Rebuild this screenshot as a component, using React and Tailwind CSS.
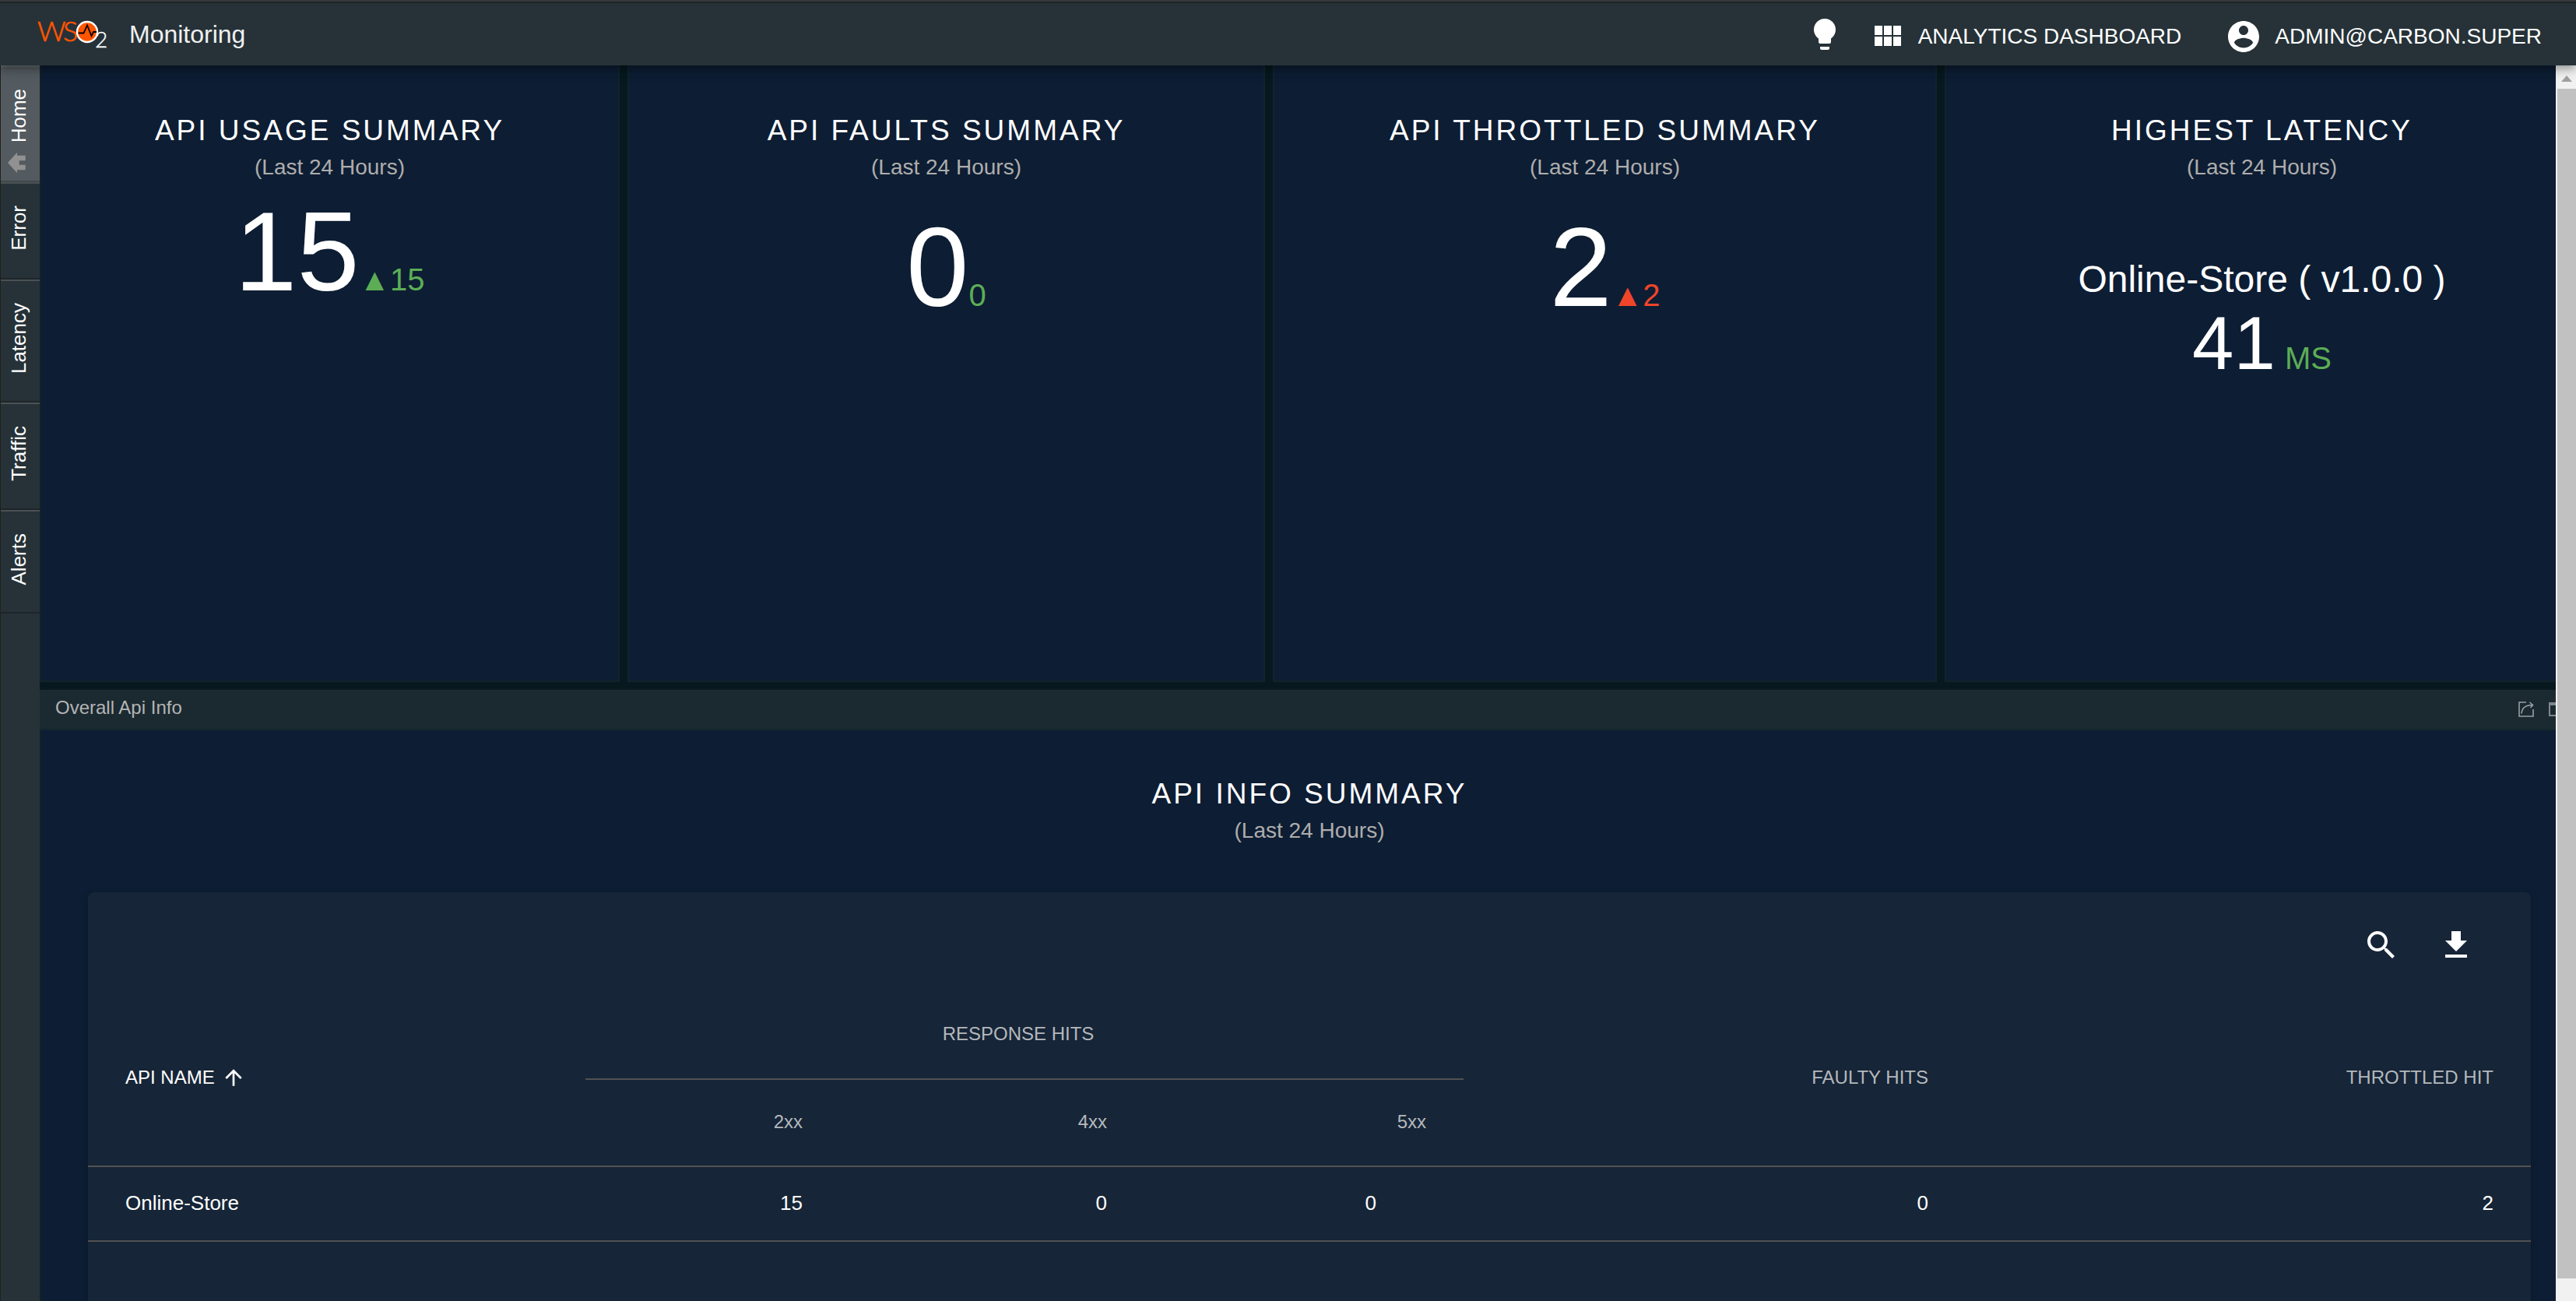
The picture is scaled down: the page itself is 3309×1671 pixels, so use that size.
import React from "react";

function Icon({ d, className, label }) {
  return (
    <svg viewBox="0 0 24 24" fill="currentColor" className={className} aria-hidden={label ? undefined : true} aria-label={label}>
      <path d={d} />
    </svg>
  );
}

const ICONS = {
  bulb: "M9 21c0 .55.45 1 1 1h4c.55 0 1-.45 1-1v-1H9v1zm3-19C8.14 2 5 5.14 5 9c0 2.38 1.19 4.47 3 5.74V17c0 .55.45 1 1 1h6c.55 0 1-.45 1-1v-2.26c1.81-1.27 3-3.36 3-5.74 0-3.86-3.14-7-7-7z",
  module: "M4 11h5V5H4v6zm0 7h5v-6H4v6zm6 0h5v-6h-5v6zm6 0h5v-6h-5v6zm-6-7h5V5h-5v6zm6-6v6h5V5h-5z",
  account:
    "M12 2C6.48 2 2 6.48 2 12s4.48 10 10 10 10-4.48 10-10S17.52 2 12 2zm0 3c1.66 0 3 1.34 3 3s-1.34 3-3 3-3-1.34-3-3 1.34-3 3-3zm0 14.2c-2.5 0-4.71-1.28-6-3.22.03-1.99 4-3.08 6-3.08 1.99 0 5.97 1.09 6 3.08-1.29 1.94-3.5 3.22-6 3.22z",
  home: "M10 20v-6h4v6h5v-8h3L12 3 2 12h3v8z",
  search:
    "M15.5 14h-.79l-.28-.27C15.41 12.59 16 11.11 16 9.5 16 5.91 13.09 3 9.5 3S3 5.91 3 9.5 5.91 16 9.5 16c1.61 0 3.09-.59 4.23-1.57l.27.28v.79l5 4.99L20.49 19l-4.99-5zm-6 0C7.01 14 5 11.99 5 9.5S7.01 5 9.5 5 14 7.01 14 9.5 11.99 14 9.5 14z",
  download: "M19 9h-4V3H9v6H5l7 7 7-7zM5 18v2h14v-2H5z",
  arrowUp: "M4 12l1.41 1.41L11 7.83V20h2V7.83l5.58 5.59L20 12l-8-8-8 8z",
};

function Logo() {
  return (
    <svg viewBox="-4 -12 104 60" className="h-15 w-26" role="img" aria-label="WSO2">
      <text x="0" y="27" fill="#ff5500" stroke="#ff5500" strokeWidth="0.7" className="font-['Lato'] text-[36px] font-light">W</text>
      <text x="33" y="27" fill="#ff5500" stroke="#ff5500" strokeWidth="0.7" className="font-['Lato'] text-[36px] font-light">S</text>
      <circle cx="64" cy="15" r="13" fill="#ff5500" stroke="#ffffff" strokeWidth="2.4" />
      <path d="M52.5 16.5h7l4.5-10 5.5 13.5 2.5-5h4" fill="none" stroke="#000000" strokeWidth="1.8" />
      <text x="74" y="35" fill="#ffffff" stroke="#ffffff" strokeWidth="0.4" className="font-['Lato'] text-[28px] font-light">2</text>
    </svg>
  );
}

function TopBar() {
  return (
    <header className="relative z-10 flex h-[82px] shrink-0 items-center border-t-2 border-[#1f2427] bg-[#263238] px-11 text-white shadow-[0_4px_8px_-2px_rgba(0,0,0,0.2),0_8px_10px_rgba(0,0,0,0.14),0_2px_20px_rgba(0,0,0,0.12)]">
      <Logo />
      <h1 className="ml-[18px] text-[32px] leading-10 text-[#f0f0f0]">Monitoring</h1>
      <nav className="ml-auto flex items-center">
        <button type="button" aria-label="Tips"><Icon d={ICONS.bulb} className="size-12" /></button>
        <a href="#dashboard" className="ml-8 flex items-center gap-4 pt-[5px] text-[28px] leading-10">
          <Icon d={ICONS.module} className="size-12" />
          ANALYTICS DASHBOARD
        </a>
        <button type="button" className="ml-14 flex items-center gap-4 pt-[5px] text-[28px] leading-10">
          <Icon d={ICONS.account} className="size-12" />
          ADMIN@CARBON.SUPER
        </button>
      </nav>
    </header>
  );
}

const TABS = ["Home", "Error", "Latency", "Traffic", "Alerts"];

function SideTabs() {
  return (
    <nav className="flex w-[50px] shrink-0 flex-col bg-[#263238] text-white">
      {TABS.map((name, i) => (
        <a
          key={name}
          href={"#" + name.toLowerCase()}
          className={
            "flex flex-col items-center border-t-2 border-b-2 pt-7 " +
            (i === 0
              ? "border-t-[#666c70] border-b-[#41474b] bg-[#535b60] pb-[7px]"
              : "border-t-[#4b5154] border-b-[#1d2529] pb-[35px]")
          }
        >
          <span className="rotate-180 pl-1 text-[26px] leading-8 [writing-mode:vertical-rl]">{name}</span>
          {i === 0 && <Icon d={ICONS.home} className="mt-2.5 mr-2 size-8 -rotate-90 text-[#919191]" />}
        </a>
      ))}
    </nav>
  );
}

function Heading({ title }) {
  return (
    <>
      <h2 className="text-[37px] leading-11 tracking-[3px] whitespace-nowrap">{title}</h2>
      <p className="mt-[7px] text-[28px] leading-9 text-[#adadad]">(Last 24 Hours)</p>
    </>
  );
}

function SummaryCard({ title, children }) {
  return (
    <section className="flex min-h-[792px] flex-col items-center border-x-2 border-b-2 border-[#12232b] bg-[#0d1d33] pt-[62px] text-white">
      <Heading title={title} />
      {children}
    </section>
  );
}

function Count({ value, delta, className }) {
  return (
    <p className={"flex items-baseline text-[144px] leading-[160px] " + className}>
      {value}
      {delta}
    </p>
  );
}

function ApiTable() {
  return (
    <table className="w-full table-fixed border-collapse text-white">
      <colgroup>
        <col className="w-[639px]" />
        <col className="w-[327px]" />
        <col className="w-[391px]" />
        <col className="w-[410px]" />
        <col className="w-[645px]" />
        <col className="w-[726px]" />
      </colgroup>
      <thead className="text-2xl text-[#b4b8bd]">
        <tr className="h-28">
          <th rowSpan={2} scope="col" className="border-b-2 border-[#515151] pb-1 pl-12 text-left font-normal text-white">
            <button type="button" className="flex items-center gap-2">
              API NAME
              <Icon d={ICONS.arrowUp} className="size-8" />
            </button>
          </th>
          <th colSpan={3} scope="colgroup" className="border-b-2 border-[#515151] pr-16 pb-1 pl-12 font-normal">RESPONSE HITS</th>
          <th rowSpan={2} scope="col" className="border-b-2 border-[#515151] pr-12 pb-1 text-right font-normal">FAULTY HITS</th>
          <th rowSpan={2} scope="col" className="border-b-2 border-[#515151] pr-12 pb-1 text-right font-normal">THROTTLED HIT</th>
        </tr>
        <tr className="h-28 border-b-2 border-[#515151]">
          <th scope="col" className="pr-12 pb-0.5 text-right font-normal">2xx</th>
          <th scope="col" className="pr-12 pb-0.5 text-right font-normal">4xx</th>
          <th scope="col" className="pr-12 pb-0.5 text-right font-normal">5xx</th>
        </tr>
      </thead>
      <tbody className="text-[26px]">
        <tr className="h-24 border-b-2 border-[#515151]">
          <td className="pb-0.5 pl-12">Online-Store</td>
          <td className="pr-12 pb-0.5 text-right">15</td>
          <td className="pr-12 pb-0.5 text-right">0</td>
          <td className="pr-28 pb-0.5 text-right">0</td>
          <td className="pr-12 pb-0.5 text-right">0</td>
          <td className="pr-12 pb-0.5 text-right">2</td>
        </tr>
      </tbody>
    </table>
  );
}

function InfoPanel() {
  return (
    <section className="flex grow flex-col">
      <div className="flex h-[52px] shrink-0 items-center border-b-2 border-[#14262d] bg-[#1b2a31] pr-[19px] pl-5 text-[#b4b4b4]">
        <h2 className="-mt-1 text-2xl">Overall Api Info</h2>
        <button type="button" aria-label="Share" className="ml-auto">
          <svg viewBox="0 0 20 20" className="size-5" fill="none" stroke="#98a0a3" strokeWidth="1.6">
            <path d="M10 1H1v18h18V10" />
            <path d="M4 15.5C4.5 9 9 4.5 18 4.5M14.5 1l4 3.5-3 3.5" />
          </svg>
        </button>
        <button type="button" aria-label="Maximize" className="ml-[19px]">
          <svg viewBox="0 0 20 20" className="size-5" fill="none" stroke="#7f878a">
            <path d="M1 4v14h18V4" strokeWidth="2" />
            <path d="M0 3h20" strokeWidth="4" />
          </svg>
        </button>
      </div>
      <div className="flex grow flex-col items-center border-x-2 border-[#12232b] bg-[#0d1d33] px-[60px] pt-[60px] text-white">
        <Heading title="API INFO SUMMARY" />
        <div className="mt-[61px] w-full grow rounded-t-lg bg-[#162537] shadow-[0_2px_10px_rgba(0,0,0,0.2)]">
          <div className="flex h-32 items-center justify-end pt-2 pr-12">
            <button type="button" aria-label="Search" className="p-6"><Icon d={ICONS.search} className="size-12" /></button>
            <button type="button" aria-label="Download CSV" className="p-6"><Icon d={ICONS.download} className="size-12" /></button>
          </div>
          <ApiTable />
        </div>
      </div>
    </section>
  );
}

function ScrollTrack() {
  return (
    <div className="flex w-[26px] shrink-0 flex-col bg-[#f1f1f1] pl-0.5" aria-hidden="true">
      <div className="flex h-[30px] items-center justify-center pt-1">
        <svg viewBox="0 0 14 8" className="h-2 w-3.5" fill="#a0a0a0"><path d="M7 0l7 8H0z" /></svg>
      </div>
      <div className="mb-[29px] grow bg-[#c1c1c1]" />
    </div>
  );
}

export default function App() {
  return (
    <div className="flex h-screen flex-col overflow-hidden border-t-2 border-[#35393c] bg-[#07181f] font-['Liberation_Sans',Arial,sans-serif]">
      <TopBar />
      <div className="flex min-h-0 grow border-l border-[#231f1d]">
        <SideTabs />
        <main className="min-w-0 grow overflow-hidden">
          <div className="-mr-[30px] flex h-full flex-col gap-2.5">
            <div className="grid shrink-0 grid-cols-[745fr_819fr_853fr_815fr] gap-2.5">
              <SummaryCard title="API USAGE SUMMARY">
                <Count value="15" className="mt-[11px]" delta={<span className="text-[40px] leading-none text-[#5cad56]">▲15</span>} />
              </SummaryCard>
              <SummaryCard title="API FAULTS SUMMARY">
                <Count value="0" className="mt-[31px]" delta={<span className="text-[40px] leading-none text-[#5cad56]">0</span>} />
              </SummaryCard>
              <SummaryCard title="API THROTTLED SUMMARY">
                <Count value="2" className="mt-[31px]" delta={<span className="text-[40px] leading-none text-[#f0452a]">▲2</span>} />
              </SummaryCard>
              <SummaryCard title="HIGHEST LATENCY">
                <p className="mt-[98px] text-[48px] leading-14">Online-Store ( v1.0.0 )</p>
                <p className="mt-1.5 flex items-baseline gap-3 text-[96px] leading-24">
                  41
                  <span className="text-[40px] leading-none text-[#5cad56]">MS</span>
                </p>
              </SummaryCard>
            </div>
            <InfoPanel />
          </div>
        </main>
        <ScrollTrack />
      </div>
    </div>
  );
}
